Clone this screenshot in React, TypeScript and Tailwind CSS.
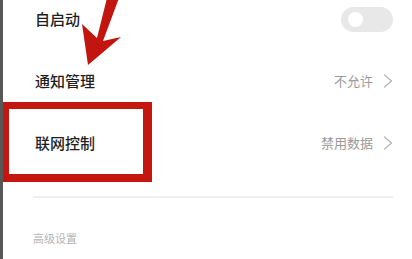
import React from "react";

const Chevron = () => (
  <svg width="10" height="14" viewBox="0 0 10 14" fill="none">
    <path d="M1.5 1 L8.5 7 L1.5 13" stroke="#b3b3b3" strokeWidth="1.2" strokeLinecap="round" strokeLinejoin="round" />
  </svg>
);

export default function App() {
  return (
    <div
      className="relative flex w-[412px] h-[259px] overflow-hidden bg-white"
      style={{ fontFamily: '"Noto Sans CJK SC", "Noto Sans", sans-serif' }}
    >
      <div className="w-[3px] shrink-0 bg-[#575757]" />
      <div className="flex flex-1 flex-col pl-[32px] pr-[19px]">
        <div className="-mt-[12px] flex h-[62px] items-center justify-between">
          <span className="text-[15px] font-medium text-[#1e1e1e]">自启动</span>
          <div className="flex h-[25px] w-[52px] items-center rounded-full bg-[#e8e8e8] pl-[7px]">
            <div className="h-[15px] w-[15px] rounded-full bg-white" />
          </div>
        </div>
        <div className="flex h-[62px] items-center justify-between">
          <span className="text-[15px] font-medium text-[#1e1e1e]">通知管理</span>
          <div className="flex items-center gap-[10px]">
            <span className="text-[13px] text-[#9a9a9a]">不允许</span>
            <Chevron />
          </div>
        </div>
        <div className="flex h-[62px] items-center justify-between">
          <span className="text-[15px] font-medium text-[#1e1e1e]">联网控制</span>
          <div className="flex items-center gap-[10px]">
            <span className="text-[13px] text-[#9a9a9a]">禁用数据</span>
            <Chevron />
          </div>
        </div>
        <div className="-ml-[2px] mt-[22px] h-[2px] bg-[#efefef]" />
        <div className="mt-[33px] -ml-[2px] text-[11px] leading-[14px] text-[#b4b4b4]">高级设置</div>
      </div>

      <div className="pointer-events-none absolute left-[3px] top-[102px] h-[80px] w-[149px] border-t-[7px] border-b-[8px] border-l-[6px] border-r-[9px] border-[#c3170f]" />

      <svg className="pointer-events-none absolute left-0 top-0" width="412" height="259" viewBox="0 0 412 259">
        <polygon points="107,-2 119,-2 103,41 121,37 88,65 82,24 97,38" fill="#c2150f" />
      </svg>
    </div>
  );
}
